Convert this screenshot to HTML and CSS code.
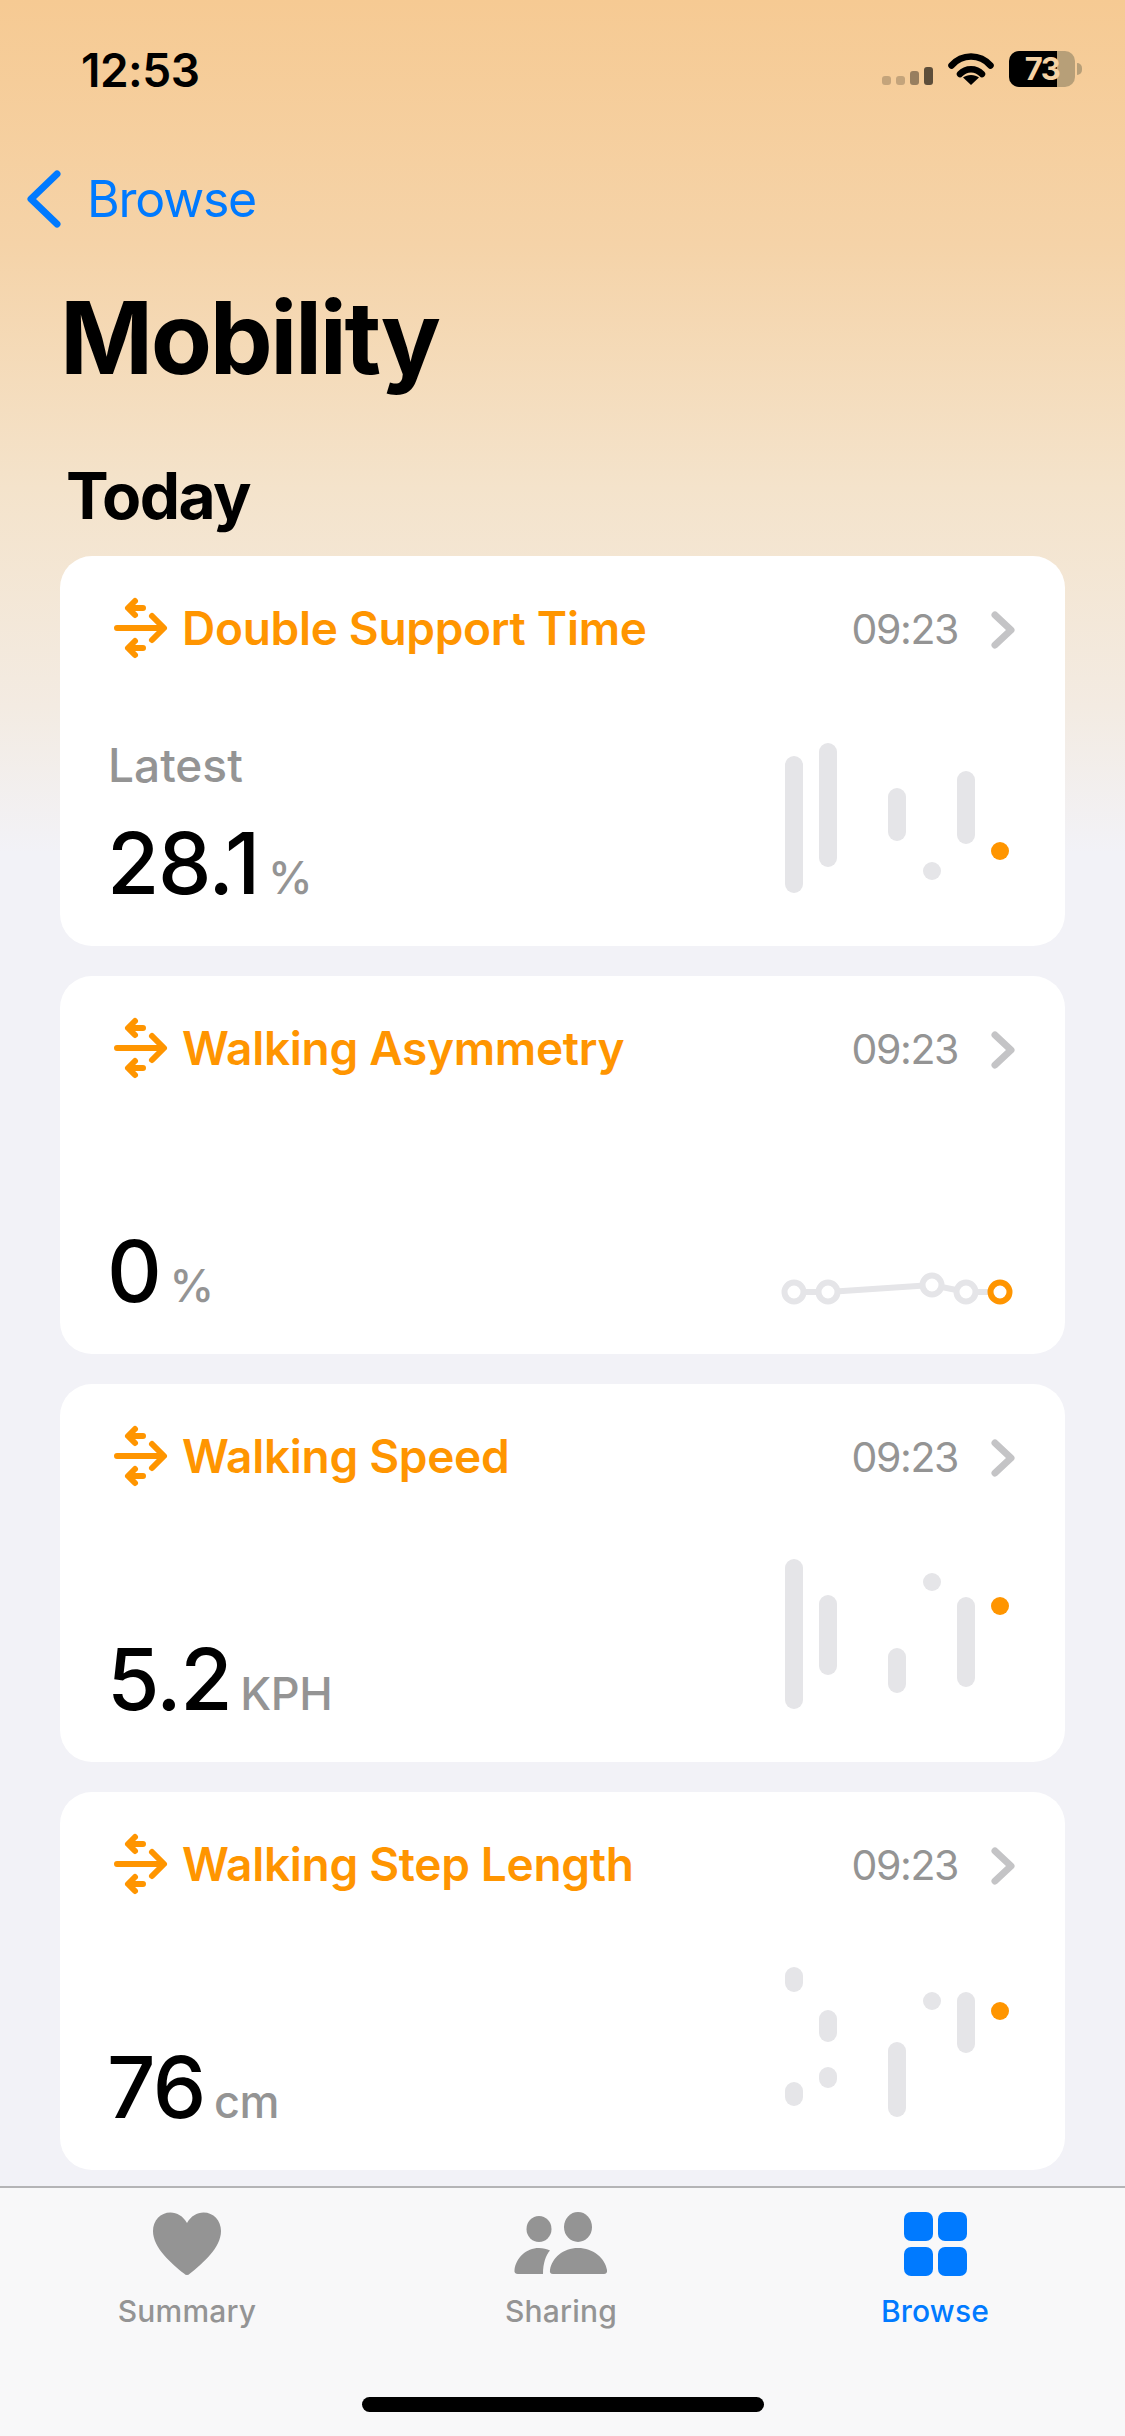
FILE: index.html
```html
<!DOCTYPE html>
<html lang="en">
<head>
    <meta charset="UTF-8">
    <meta name="viewport" content="width=device-width, initial-scale=1.0">
    <title>Mobility</title>
    <link rel="stylesheet" href="styles.css">
</head>
<body>
    <div class="screen">
        <div class="content">
            <div class="status-bar">
                <span class="clock">12:53</span>
                <div class="status-icons">
                    <svg class="signal" width="51" height="18" viewBox="0 0 51 18">
                        <rect x="0" y="9" width="9" height="9" rx="3" fill="#000" opacity="0.2"/>
                        <rect x="14" y="9" width="9" height="9" rx="3" fill="#000" opacity="0.2"/>
                        <rect x="28" y="4" width="9" height="14" rx="3" fill="#000" opacity="0.38"/>
                        <rect x="42" y="0" width="9" height="18" rx="3" fill="#000" opacity="0.62"/>
                    </svg>
                    <svg class="wifi" width="46" height="34" viewBox="0 0 46 34">
                        <path d="M3.500 14.500C14 2.500 32 2.500 42.500 14.500" fill="none" stroke="#000" stroke-width="6.500" stroke-linecap="round"/>
                        <path d="M12 23C18 16.500 28 16.500 34 23" fill="none" stroke="#000" stroke-width="6.500" stroke-linecap="round"/>
                        <path d="M15 26.500C19 23 27 23 31 26.500L23 34Z" fill="#000"/>
                    </svg>
                    <div class="battery">
                        <div class="battery-fill"></div>
                        <span class="battery-text">73</span>
                    </div>
                    <div class="battery-nub"></div>
                </div>
            </div>

            <a class="back-link" href="#">
                <svg width="36" height="60" viewBox="0 0 36 60">
                    <path d="M31 5L5 30L31 55" fill="none" stroke="#007aff" stroke-width="7" stroke-linecap="round" stroke-linejoin="round"/>
                </svg>
                <span>Browse</span>
            </a>

            <h1>Mobility</h1>
            <h2>Today</h2>

            <div class="card-list">
                <div class="card card-latest">
                    <div class="card-header">
                        <svg class="trend-icon" width="60" height="64" viewBox="0 0 60 64"><use href="#trend"/></svg>
                        <span class="card-title">Double Support Time</span>
                        <span class="card-time">09:23</span>
                        <svg class="chevron" width="24" height="38" viewBox="0 0 24 38"><use href="#chev"/></svg>
                    </div>
                    <div class="card-body">
                        <div class="reading">
                            <div class="latest">Latest</div>
                            <div class="value-row"><span class="value">28.1</span><span class="unit">%</span></div>
                        </div>
                        <svg class="chart" width="226" height="160" viewBox="0 0 226 160">
                            <rect class="bar" x="3" y="23" width="18" height="137" rx="9"/>
                            <rect class="bar" x="37" y="10" width="18" height="124" rx="9"/>
                            <rect class="bar" x="106" y="55" width="18" height="53" rx="9"/>
                            <circle class="bar" cx="150" cy="138" r="9"/>
                            <rect class="bar" x="175" y="38" width="18" height="73" rx="9"/>
                            <circle class="dot" cx="218" cy="118" r="9"/>
                        </svg>
                    </div>
                </div>

                <div class="card">
                    <div class="card-header">
                        <svg class="trend-icon" width="60" height="64" viewBox="0 0 60 64"><use href="#trend"/></svg>
                        <span class="card-title">Walking Asymmetry</span>
                        <span class="card-time">09:23</span>
                        <svg class="chevron" width="24" height="38" viewBox="0 0 24 38"><use href="#chev"/></svg>
                    </div>
                    <div class="card-body">
                        <div class="reading">
                            <div class="value-row"><span class="value">0</span><span class="unit">%</span></div>
                        </div>
                        <svg class="chart" width="226" height="160" viewBox="0 0 226 160">
                            <path class="chart-line" d="M12 151H46L150 144L184 151H218"/>
                            <circle class="ring" cx="12" cy="151" r="9.500"/>
                            <circle class="ring" cx="46" cy="151" r="9.500"/>
                            <circle class="ring" cx="150" cy="144" r="9.500"/>
                            <circle class="ring" cx="184" cy="151" r="9.500"/>
                            <circle class="ring ring-now" cx="218" cy="151" r="9.500"/>
                        </svg>
                    </div>
                </div>

                <div class="card">
                    <div class="card-header">
                        <svg class="trend-icon" width="60" height="64" viewBox="0 0 60 64"><use href="#trend"/></svg>
                        <span class="card-title">Walking Speed</span>
                        <span class="card-time">09:23</span>
                        <svg class="chevron" width="24" height="38" viewBox="0 0 24 38"><use href="#chev"/></svg>
                    </div>
                    <div class="card-body">
                        <div class="reading">
                            <div class="value-row"><span class="value">5.2</span><span class="unit">KPH</span></div>
                        </div>
                        <svg class="chart" width="226" height="160" viewBox="0 0 226 160">
                            <rect class="bar" x="3" y="10" width="18" height="150" rx="9"/>
                            <rect class="bar" x="37" y="46" width="18" height="80" rx="9"/>
                            <rect class="bar" x="106" y="99" width="18" height="45" rx="9"/>
                            <circle class="bar" cx="150" cy="33" r="9"/>
                            <rect class="bar" x="175" y="48" width="18" height="90" rx="9"/>
                            <circle class="dot" cx="218" cy="57" r="9"/>
                        </svg>
                    </div>
                </div>

                <div class="card">
                    <div class="card-header">
                        <svg class="trend-icon" width="60" height="64" viewBox="0 0 60 64"><use href="#trend"/></svg>
                        <span class="card-title">Walking Step Length</span>
                        <span class="card-time">09:23</span>
                        <svg class="chevron" width="24" height="38" viewBox="0 0 24 38"><use href="#chev"/></svg>
                    </div>
                    <div class="card-body">
                        <div class="reading">
                            <div class="value-row"><span class="value">76</span><span class="unit">cm</span></div>
                        </div>
                        <svg class="chart" width="226" height="160" viewBox="0 0 226 160">
                            <rect class="bar" x="3" y="10" width="18" height="25" rx="9"/>
                            <rect class="bar" x="3" y="125" width="18" height="24" rx="9"/>
                            <rect class="bar" x="37" y="53" width="18" height="32" rx="9"/>
                            <rect class="bar" x="37" y="110" width="18" height="21" rx="9"/>
                            <rect class="bar" x="106" y="85" width="18" height="75" rx="9"/>
                            <circle class="bar" cx="150" cy="44" r="9"/>
                            <rect class="bar" x="175" y="35" width="18" height="61" rx="9"/>
                            <circle class="dot" cx="218" cy="54" r="9"/>
                        </svg>
                    </div>
                </div>
            </div>
        </div>

        <div class="tab-bar">
            <div class="tabs">
                <div class="tab">
                    <svg width="68" height="64" viewBox="0 0 68 64">
                        <path d="M34 11C30 4 24 0.500 17.500 0.500C7.500 0.500 0 8.500 0 19C0 36 19 52 31 61.500C33 63.500 35 63.500 37 61.500C49 52 68 36 68 19C68 8.500 60.500 0.500 50.500 0.500C44 0.500 38 4 34 11Z" fill="#949494"/>
                    </svg>
                    <span>Summary</span>
                </div>
                <div class="tab">
                    <svg width="94" height="64" viewBox="0 0 94 64">
                        <ellipse cx="25" cy="17" rx="12.500" ry="13" fill="#949494"/>
                        <ellipse cx="64" cy="15" rx="14" ry="15" fill="#949494"/>
                        <path d="M4 62C1.500 62 0 60.500 0.500 58C2 46 12 36 25 36C29 36 33 37 36 38.500C32 43 29 51 29 62Z" fill="#949494"/>
                        <path d="M39 62C36.500 62 35.500 60.500 36 58C38 46 49 36 64 36C79 36 91 46 93 58C93.500 60.500 92 62 90 62Z" fill="#949494"/>
                    </svg>
                    <span>Sharing</span>
                </div>
                <div class="tab tab-active">
                    <div class="grid-icon">
                        <i></i><i></i><i></i><i></i>
                    </div>
                    <span>Browse</span>
                </div>
            </div>
            <div class="home-indicator"></div>
        </div>
    </div>

    <svg class="sprites" width="0" height="0">
        <defs>
            <g id="trend" fill="none" stroke="#ff9500" stroke-width="6" stroke-linecap="round" stroke-linejoin="round">
                <path d="M7 32H53M42 20L54 32L42 44"/>
                <path d="M19 12H33M25 5L18 12L25 19"/>
                <path d="M19 52H33M25 45L18 52L25 59"/>
            </g>
            <path id="chev" d="M4 4L20 19L4 34" fill="none" stroke="#c4c4c6" stroke-width="7" stroke-linecap="round" stroke-linejoin="round"/>
        </defs>
    </svg>
</body>
</html>
```
FILE: styles.css
```css
* {
    margin: 0;
    padding: 0;
    box-sizing: border-box;
}

body {
    font-family: Inter, 'Liberation Sans', sans-serif;
    background: #f2f2f7;
    color: #000;
}

.screen {
    width: 1125px;
    height: 2436px;
    display: flex;
    flex-direction: column;
    background: linear-gradient(180deg, #f6ca93 0%, #f5d3a8 10%, #f4e3cb 20%, #f3ebe2 29%, #f2f2f7 35%);
    overflow: hidden;
}

.content {
    flex: 1;
    min-height: 0;
}

/* status bar */
.status-bar {
    height: 169px;
    padding: 47px 43px 0 81px;
    display: flex;
    justify-content: space-between;
    align-items: flex-start;
}

.clock {
    font-size: 46px;
    font-weight: 600;
    line-height: 46px;
    letter-spacing: -0.5px;
}

.status-icons {
    display: flex;
    align-items: flex-start;
    margin-top: 4px;
}

.signal {
    margin-top: 16px;
    margin-right: 15px;
}

.wifi {
    margin-top: 0;
    margin-right: 15px;
}

.battery {
    position: relative;
    width: 66px;
    height: 36px;
    border-radius: 10px;
    background: #b79f78;
    overflow: hidden;
}

.battery-fill {
    width: 48px;
    height: 100%;
    background: #000;
}

.battery-text {
    display: block;
    margin-top: -36px;
    text-align: center;
    font-size: 31px;
    line-height: 36px;
    font-weight: 700;
    letter-spacing: -1.5px;
    color: #f6d2a4;
}

.battery-nub {
    width: 5px;
    height: 12px;
    margin: 12px 0 0 2px;
    border-radius: 0 6px 6px 0;
    background: #b79f78;
}

/* navigation */
.back-link {
    display: flex;
    align-items: center;
    gap: 25px;
    height: 60px;
    padding-left: 26px;
    color: #007aff;
    font-size: 50px;
    text-decoration: none;
    letter-spacing: -1.2px;
}

h1 {
    margin: 49px 0 0 60px;
    font-size: 100px;
    font-weight: 700;
    line-height: 120px;
    letter-spacing: -2.4px;
}

h2 {
    margin: 62px 0 0 66px;
    font-size: 64px;
    font-weight: 700;
    line-height: 72px;
    letter-spacing: -1.6px;
}

/* cards */
.card-list {
    display: flex;
    flex-direction: column;
    gap: 30px;
    margin: 24px 60px 0;
}

.card {
    min-height: 378px;
    padding: 40px 50px 40px 47px;
    display: flex;
    flex-direction: column;
    justify-content: space-between;
    background: #fff;
    border-radius: 32px;
}

.card-latest {
    min-height: 390px;
}

.card-header {
    display: flex;
    align-items: center;
    height: 64px;
}

.trend-icon {
    margin-left: 3px;
    flex-shrink: 0;
}

.card-title {
    flex: 1;
    margin-left: 12px;
    font-size: 46px;
    font-weight: 600;
    letter-spacing: -0.3px;
    color: #ff9500;
}

.card-time {
    margin-top: 2px;
    font-size: 41px;
    letter-spacing: -1.4px;
    color: #949494;
}

.chevron {
    margin: 4px 0 0 33px;
    flex-shrink: 0;
}

.card-body {
    display: flex;
    justify-content: space-between;
    align-items: flex-end;
    padding-right: 7px;
}

.latest {
    margin: 0 0 33px 1px;
    font-size: 46px;
    font-weight: 500;
    line-height: 46px;
    color: #949494;
}

.value-row {
    display: flex;
    align-items: baseline;
    gap: 9px;
}

.value {
    font-size: 85px;
    font-weight: 510;
    line-height: 85px;
    letter-spacing: -1.4px;
}

.unit {
    font-size: 45px;
    font-weight: 500;
    letter-spacing: -0.5px;
    color: #949494;
}

.chart {
    margin-bottom: 13px;
    overflow: visible;
}

.bar {
    fill: #e5e5e8;
}

.dot {
    fill: #ff9500;
}

.chart-line {
    fill: none;
    stroke: #e5e5e8;
    stroke-width: 6;
}

.ring {
    fill: #fff;
    stroke: #e5e5e8;
    stroke-width: 6;
}

.ring-now {
    stroke: #ff9500;
}

/* tab bar */
.tab-bar {
    height: 250px;
    border-top: 2px solid #b4b4b6;
    background: #f8f8f9;
}

.tabs {
    display: grid;
    grid-template-columns: repeat(3, 1fr);
    padding: 24px 3px 0 0;
}

.tab {
    display: flex;
    flex-direction: column;
    align-items: center;
    font-size: 30px;
    font-weight: 500;
    line-height: 36px;
    letter-spacing: 0.2px;
    color: #949494;
}

.tab svg {
    height: 64px;
}

.tab span {
    margin-top: 17px;
}

.tab-active {
    color: #007aff;
}

.grid-icon {
    display: grid;
    grid-template-columns: 29px 29px;
    gap: 5px;
    height: 64px;
}

.grid-icon i {
    display: block;
    height: 29px;
    border-radius: 7px;
    background: #007aff;
}

.home-indicator {
    width: 402px;
    height: 15px;
    margin: 68px auto 0;
    border-radius: 8px;
    background: #000;
}

.sprites {
    position: absolute;
}
```
